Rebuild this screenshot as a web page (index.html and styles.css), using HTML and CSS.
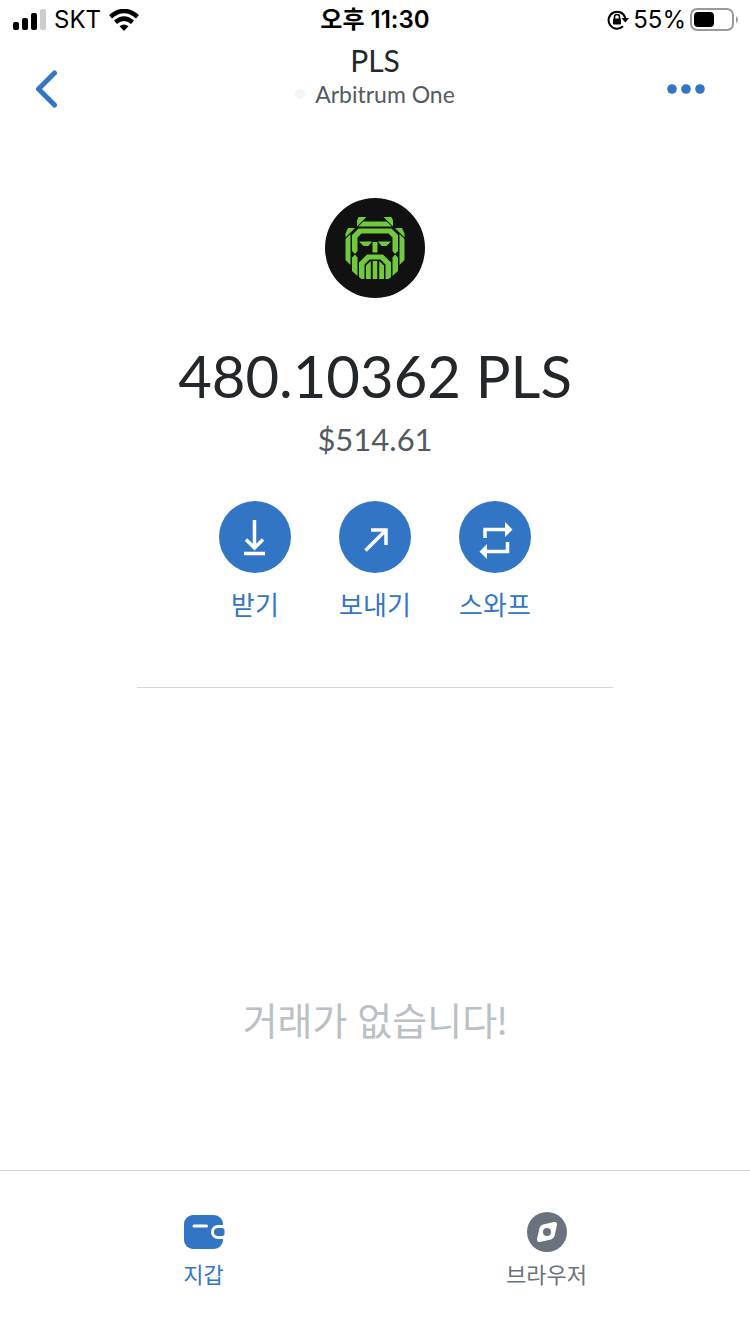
FILE: index.html
```
<!DOCTYPE html>
<html lang="ko">
<head>
  <meta charset="UTF-8">
  <meta name="viewport" content="width=device-width, initial-scale=1.0">
  <title>PLS - Arbitrum One</title>
  <link rel="stylesheet" href="styles.css">
</head>
<body>
  <!-- Status bar -->
  <div class="status-bar">
    <div class="status-left">
      <svg width="34" height="22" viewBox="0 0 34 22" aria-hidden="true">
        <rect x="1" y="13" width="6" height="8" rx="2"/>
        <rect x="10" y="9" width="6" height="12" rx="2"/>
        <rect x="19" y="4" width="6" height="17" rx="2"/>
        <rect x="28" y="0" width="6" height="21" rx="2" fill="#ccc"/>
      </svg>
      <span>SKT</span>
      <svg width="30" height="22" viewBox="0 0 30 22" aria-hidden="true">
        <path d="M1.500 7.800Q15-3.800 28.500 7.800" fill="none" stroke="#000" stroke-width="4.500"/>
        <path d="M6.500 13.300Q15 6 23.500 13.300" fill="none" stroke="#000" stroke-width="4.500"/>
        <path d="M10.500 17.300Q15 13.500 19.500 17.300L15 22Z"/>
      </svg>
    </div>
    <div class="status-time">오후 11:30</div>
    <div class="status-right">
      <svg width="22" height="20" viewBox="0 0 22 20" aria-hidden="true">
        <path d="M18.300 8A8.500 8.500 0 1 0 16 16.300" fill="none" stroke="#000" stroke-width="2"/>
        <path d="M14.500 8H22L18.300 12.500Z"/>
        <rect x="6" y="8.500" width="8" height="6" rx="1"/>
        <path d="M7.500 9V7a2.500 2.500 0 0 1 5 0v2" fill="none" stroke="#000" stroke-width="1.500"/>
      </svg>
      <span>55%</span>
      <svg width="48" height="24" viewBox="0 0 48 24" aria-hidden="true">
        <rect x="1" y="1" width="42" height="21" rx="6" fill="none" stroke="#999" stroke-width="2"/>
        <rect x="4" y="4" width="20" height="15" rx="4"/>
        <path d="M46 8q2 1.500 2 3.500t-2 3.500z" fill="#999"/>
      </svg>
    </div>
  </div>

  <!-- Header -->
  <header class="header">
    <button type="button" class="icon-btn" aria-label="뒤로">
      <svg width="24" height="38" viewBox="0 0 24 38">
        <path d="M19.500 3L3.500 19L19.500 35" fill="none" stroke="#3275c4" stroke-width="5" stroke-linecap="round" stroke-linejoin="round"/>
      </svg>
    </button>
    <div class="header-title">
      <h1>PLS</h1>
      <p class="network"><span class="network-dot"></span>Arbitrum One</p>
    </div>
    <button type="button" class="icon-btn more-btn" aria-label="더 보기">
      <svg width="38" height="10" viewBox="0 0 38 10">
        <circle cx="5" cy="5" r="4.800"/>
        <circle cx="19" cy="5" r="4.800"/>
        <circle cx="33" cy="5" r="4.800"/>
      </svg>
    </button>
  </header>

  <!-- Token overview -->
  <main class="token">
    <svg class="token-logo" width="100" height="100" viewBox="0 0 100 100" role="img" aria-label="PLS">
      <circle cx="50" cy="50" r="50" fill="#111"/>
      <g fill="#70ca3b">
        <path d="M33.500 19H41.500L32 28.500V22.500Z"/>
        <path d="M66.500 19H58.500L68 28.500V22.500Z"/>
        <path d="M38.500 23.500H61.500L67 28.500H33Z"/>
        <path d="M23 30H30L20.500 39.500V35.500Z"/>
        <path d="M77 30H70L79.500 39.500V35.500Z"/>
        <path d="M33.500 30.500H66.500L73 37V53L70 56L67.500 53V39.500L63.500 35.500H36.500L32.500 39.500V53L30 56L27 53V37Z"/>
        <path d="M20.500 41L25.500 36V67L20.500 62Z"/>
        <path d="M79.500 41L74.500 36V67L79.500 62Z"/>
        <path d="M30 56.500L32.500 59.500V78L27 73V59.500Z"/>
        <path d="M70 56.500L67.500 59.500V78L73 73V59.500Z"/>
        <path d="M34 43.500H47L43.500 48H38.500Z"/>
        <path d="M66 43.500H53L56.500 48H61.500Z"/>
        <path d="M47.500 44H52.500V54.500H47.500Z"/>
        <path d="M42 56.500H58L66 64.500V79L63.500 81H60.500V66.500L55.500 61.500H44.500L39.500 66.500V81H36.500L34 79V64.500Z"/>
        <path d="M41 67.500L45.800 63V81H41Z"/>
        <path d="M47.700 63H52.300V81H47.700Z"/>
        <path d="M54.200 63L59 67.500V81H54.200Z"/>
      </g>
    </svg>
    <p class="amount">480.10362 PLS</p>
    <p class="fiat">$514.61</p>

    <div class="actions">
      <button type="button" class="action">
        <span class="action-icon">
          <svg width="72" height="72" viewBox="0 0 72 72" fill="none" stroke="#fff" stroke-width="3.500">
            <path d="M35.500 19V46M27 38.500L35.500 47L44 38.500M25 52.500H46"/>
          </svg>
        </span>
        받기
      </button>
      <button type="button" class="action">
        <span class="action-icon">
          <svg width="72" height="72" viewBox="0 0 72 72" fill="none" stroke="#fff" stroke-width="3.500">
            <path d="M32 29H47V44M47 29L26.500 49.500"/>
          </svg>
        </span>
        보내기
      </button>
      <button type="button" class="action">
        <span class="action-icon">
          <svg width="72" height="72" viewBox="0 0 72 72" fill="none" stroke="#fff" stroke-width="3.500">
            <path d="M26 37V28.500H47M48.500 41V50.500H27"/>
            <path d="M46 21L53.500 28.500L46 36ZM28 43L20.500 50.500L28 58Z" fill="#fff" stroke="none"/>
          </svg>
        </span>
        스와프
      </button>
    </div>

    <hr class="divider">

    <p class="empty">거래가 없습니다!</p>
  </main>

  <!-- Bottom tabs -->
  <nav class="tab-bar">
    <a href="#wallet" class="tab active">
      <svg width="42" height="40" viewBox="0 0 42 40" aria-hidden="true">
        <rect x="1" y="3" width="39" height="34" rx="9" fill="#3275c4"/>
        <path d="M11 14H23.500" stroke="#fff" stroke-width="3" stroke-linecap="round"/>
        <path d="M42 13H35a7 7 0 0 0 0 14h7z" fill="#fff"/>
        <path d="M39 16H35a4 4 0 0 0 0 8H39q2.500 0 2.500-2.500v-3q0-2.500-2.500-2.500z" fill="#3275c4"/>
      </svg>
      지갑
    </a>
    <a href="#browser" class="tab">
      <svg width="40" height="40" viewBox="0 0 40 40" aria-hidden="true">
        <circle cx="20" cy="20" r="20" fill="#6a737d"/>
        <path d="M16 12.500L27 10Q30.500 9.500 30 13L27.500 24Q26.500 27 24 27.500L13 30Q9.500 30.500 10 27L12.500 16Q13.500 13 16 12.500Z" fill="#fff"/>
        <circle cx="20" cy="20" r="4" fill="#6a737d"/>
      </svg>
      브라우저
    </a>
  </nav>
</body>
</html>
```
FILE: styles.css
```
* {
  margin: 0;
  padding: 0;
  box-sizing: border-box;
}

body {
  font-family: Lato, "Noto Sans CJK KR", sans-serif;
  background-color: #fff;
  color: #24272a;
  display: flex;
  flex-direction: column;
  min-height: 100vh;
}

button {
  font-family: inherit;
  background: none;
  border: none;
  cursor: pointer;
}

svg {
  display: block;
}

/* Status bar */
.status-bar {
  display: grid;
  grid-template-columns: 1fr auto 1fr;
  align-items: center;
  height: 40px;
  padding: 0 12px;
  font-family: Inter, "Noto Sans CJK KR", sans-serif;
  font-size: 24px;
  line-height: 32px;
  color: #000;
}

.status-left,
.status-right {
  display: flex;
  align-items: center;
  gap: 8px;
}

.status-right {
  justify-content: flex-end;
  gap: 4px;
}

.status-time {
  font-weight: 600;
}

/* Header */
.header {
  display: grid;
  grid-template-columns: 1fr auto 1fr;
  align-items: end;
  height: 72px;
  padding: 0 35px;
}

.header-title {
  text-align: center;
  padding-bottom: 2px;
}

.header-title h1 {
  font-size: 30px;
  font-weight: 400;
  line-height: 36px;
}

.network {
  display: flex;
  align-items: center;
  gap: 10px;
  font-size: 23px;
  line-height: 32px;
  color: #535a61;
}

.network-dot {
  width: 10px;
  height: 10px;
  border-radius: 50%;
  background-color: #f2f4f6;
}

.icon-btn {
  display: flex;
  align-items: center;
  height: 46px;
  justify-self: start;
}

.more-btn {
  justify-self: end;
  padding-right: 10px;
  fill: #3275c4;
}

/* Token overview */
.token {
  flex: 1;
  display: flex;
  flex-direction: column;
  align-items: center;
  padding-top: 86px;
}

.amount {
  margin-top: 42px;
  font-size: 58px;
  line-height: 72px;
}

.fiat {
  margin-top: 4px;
  font-size: 31px;
  line-height: 46px;
  color: #535a61;
}

.actions {
  display: flex;
  gap: 48px;
  margin-top: 39px;
}

.action {
  display: flex;
  flex-direction: column;
  align-items: center;
  gap: 14px;
  width: 72px;
  font-size: 26px;
  line-height: 36px;
  white-space: nowrap;
  color: #3275c4;
}

.action-icon {
  border-radius: 50%;
  background-color: #3275c4;
}

.divider {
  width: calc(100% - 274px);
  margin-top: 64px;
  border: none;
  border-top: 1px solid #d6d9dc;
}

.empty {
  margin: auto 0 122px;
  font-size: 38px;
  line-height: 56px;
  color: #bbc0c5;
}

/* Bottom tabs */
.tab-bar {
  display: grid;
  grid-template-columns: 1fr 1fr;
  padding: 41px 32px 43px;
  border-top: 1px solid #d6d9dc;
}

.tab {
  display: flex;
  flex-direction: column;
  align-items: center;
  gap: 7px;
  font-size: 22px;
  line-height: 32px;
  color: #6a737d;
  text-decoration: none;
}

.tab.active {
  color: #3275c4;
}
```
